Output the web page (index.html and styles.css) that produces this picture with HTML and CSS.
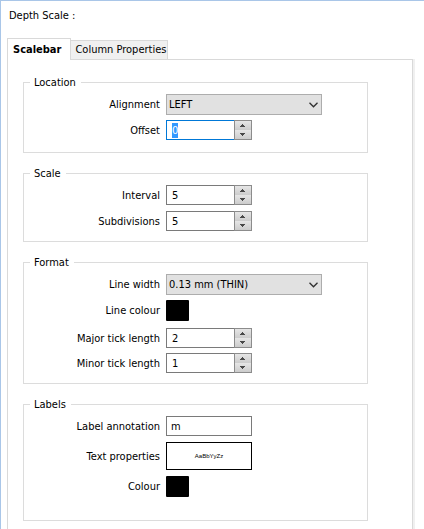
FILE: index.html
```html
<!DOCTYPE html>
<html lang="en">
<head>
<meta charset="utf-8">
<title>Depth Scale</title>
<link rel="stylesheet" href="styles.css">
</head>
<body>
<main class="window">
  <h1 class="title">Depth Scale :</h1>
  <div class="tabs" role="tablist">
    <button class="tab tab-active" type="button" role="tab" aria-selected="true">Scalebar</button>
    <button class="tab" type="button" role="tab" aria-selected="false">Column Properties</button>
  </div>
  <form class="pane">
    <fieldset class="group">
      <legend>Location</legend>
      <div class="rows">
        <div class="row">
          <label for="alignment">Alignment</label>
          <div class="combo">
            <select id="alignment"><option>LEFT</option></select>
            <svg class="chevron" viewBox="0 0 9 6" aria-hidden="true"><path d="M.5 .8 4.5 4.8 8.5 .8"/></svg>
          </div>
        </div>
        <div class="row">
          <label for="offset">Offset</label>
          <div class="spin">
            <input id="offset" type="text" inputmode="numeric" value="0" autofocus>
            <div class="steps">
              <button type="button" aria-label="Increase"><svg viewBox="0 0 5 3"><path d="M2 0h1v1h1v1h1v1H0V2h1V1h1z"/></svg></button>
              <button type="button" aria-label="Decrease"><svg viewBox="0 0 5 3"><path d="M0 0h5v1H4v1H3v1H2V2H1V1H0z"/></svg></button>
            </div>
          </div>
        </div>
      </div>
    </fieldset>

    <fieldset class="group group-short">
      <legend>Scale</legend>
      <div class="rows rows-loose">
        <div class="row">
          <label for="interval">Interval</label>
          <div class="spin">
            <input id="interval" type="text" inputmode="numeric" value="5">
            <div class="steps">
              <button type="button" aria-label="Increase"><svg viewBox="0 0 5 3"><path d="M2 0h1v1h1v1h1v1H0V2h1V1h1z"/></svg></button>
              <button type="button" aria-label="Decrease"><svg viewBox="0 0 5 3"><path d="M0 0h5v1H4v1H3v1H2V2H1V1H0z"/></svg></button>
            </div>
          </div>
        </div>
        <div class="row">
          <label for="subdivisions">Subdivisions</label>
          <div class="spin">
            <input id="subdivisions" type="text" inputmode="numeric" value="5">
            <div class="steps">
              <button type="button" aria-label="Increase"><svg viewBox="0 0 5 3"><path d="M2 0h1v1h1v1h1v1H0V2h1V1h1z"/></svg></button>
              <button type="button" aria-label="Decrease"><svg viewBox="0 0 5 3"><path d="M0 0h5v1H4v1H3v1H2V2H1V1H0z"/></svg></button>
            </div>
          </div>
        </div>
      </div>
    </fieldset>

    <fieldset class="group group-short">
      <legend>Format</legend>
      <div class="rows">
        <div class="row">
          <label for="line-width">Line width</label>
          <div class="combo">
            <select id="line-width"><option>0.13 mm (THIN)</option></select>
            <svg class="chevron" viewBox="0 0 9 6" aria-hidden="true"><path d="M.5 .8 4.5 4.8 8.5 .8"/></svg>
          </div>
        </div>
        <div class="row row-spaced">
          <label for="line-colour">Line colour</label>
          <button class="swatch" id="line-colour" type="button"></button>
        </div>
        <div class="row">
          <label for="major">Major tick length</label>
          <div class="spin">
            <input id="major" type="text" inputmode="numeric" value="2">
            <div class="steps">
              <button type="button" aria-label="Increase"><svg viewBox="0 0 5 3"><path d="M2 0h1v1h1v1h1v1H0V2h1V1h1z"/></svg></button>
              <button type="button" aria-label="Decrease"><svg viewBox="0 0 5 3"><path d="M0 0h5v1H4v1H3v1H2V2H1V1H0z"/></svg></button>
            </div>
          </div>
        </div>
        <div class="row">
          <label for="minor">Minor tick length</label>
          <div class="spin">
            <input id="minor" type="text" inputmode="numeric" value="1">
            <div class="steps">
              <button type="button" aria-label="Increase"><svg viewBox="0 0 5 3"><path d="M2 0h1v1h1v1h1v1H0V2h1V1h1z"/></svg></button>
              <button type="button" aria-label="Decrease"><svg viewBox="0 0 5 3"><path d="M0 0h5v1H4v1H3v1H2V2H1V1H0z"/></svg></button>
            </div>
          </div>
        </div>
      </div>
    </fieldset>

    <fieldset class="group group-tall">
      <legend>Labels</legend>
      <div class="rows rows-loose">
        <div class="row">
          <label for="annotation">Label annotation</label>
          <input class="text" id="annotation" type="text" value="m">
        </div>
        <div class="row">
          <label for="text-props">Text properties</label>
          <button class="sample" id="text-props" type="button">AaBbYyZz</button>
        </div>
        <div class="row">
          <label for="colour">Colour</label>
          <button class="swatch" id="colour" type="button"></button>
        </div>
      </div>
    </fieldset>
  </form>
</main>
<script src="script.js"></script>
</body>
</html>
```
FILE: styles.css
```css
* {
  box-sizing: border-box;
}

body {
  margin: 0;
  background: #fff;
  color: #000;
  font: 11px/15px "DejaVu Sans Condensed", "Noto Sans", sans-serif;
}

button,
input,
select {
  margin: 0;
  border-radius: 0;
  color: inherit;
  font: inherit;
}

.window {
  display: flex;
  flex-direction: column;
  min-height: 100vh;
  padding: 7px 11px 0 6px;
  border-top: 1px solid #a9c6e8;
  border-left: 1px solid #a9c6e8;
}

.title {
  margin: 0 0 15px 2px;
  font-size: 11px;
  font-weight: normal;
  line-height: 15px;
}

.tabs {
  display: flex;
  align-items: flex-end;
}

.tab {
  height: 19px;
  padding: 0 1px 0 4px;
  border: 1px solid #d9d9d9;
  border-left: 0;
  border-bottom: 0;
  background: #f0f0f0;
  line-height: 18px;
}

.tab-active {
  z-index: 1;
  height: 22px;
  margin-bottom: -1px;
  padding: 0 9px 0 5px;
  border-left: 1px solid #d9d9d9;
  background: #fff;
  font-weight: bold;
}

.pane {
  flex: 1;
  padding: 15px 44px 8px 15px;
  border: 1px solid #d9d9d9;
  border-bottom: 0;
  box-shadow: 2px 0 #f0f0f0;
}

.group {
  min-width: 0;
  margin: 0 0 13px;
  padding: 4px 0 12px;
  border: 1px solid #dcdcdc;
}

.group-short {
  padding-bottom: 10px;
}

.group-tall {
  margin-bottom: 0;
  padding-bottom: 23px;
}

.group legend {
  margin-left: 6px;
  padding: 0 5px 0 4px;
}

.rows {
  display: grid;
  gap: 5px;
}

.rows-loose {
  gap: 6px;
}

.row {
  display: grid;
  grid-template-columns: 136px auto;
  column-gap: 6px;
  align-items: center;
  justify-content: start;
}

.row-spaced {
  margin-bottom: 2px;
}

.row label {
  text-align: right;
  white-space: nowrap;
}

.combo {
  position: relative;
  width: 156px;
  height: 21px;
}

.combo select {
  display: block;
  width: 100%;
  height: 100%;
  padding: 0 20px 0 2px;
  border: 1px solid #adadad;
  outline: 0;
  background: #e1e1e1;
  appearance: none;
}

.chevron {
  position: absolute;
  top: 8px;
  right: 4px;
  width: 9px;
  height: 6px;
  fill: none;
  stroke: #303030;
  stroke-width: 1.3;
  pointer-events: none;
}

.spin {
  display: flex;
  width: 86px;
  height: 20px;
}

.spin input {
  flex: 1;
  min-width: 0;
  padding: 0 5px;
  border: 1px solid #7a7a7a;
  border-right: 0;
  outline: 0;
  background: #fff;
}

.spin input:focus {
  border-color: #0078d7;
}

.spin input::selection {
  background: #3399ff;
  color: #fff;
}

.steps {
  display: grid;
  grid-template-rows: 1fr 1fr;
  width: 18px;
  border: 1px solid #8c8c8c;
}

.steps button {
  display: flex;
  align-items: center;
  justify-content: center;
  padding: 0 2px 0 0;
  border: 0;
  background: linear-gradient(#e6e6e6, #cccccc);
}

.steps svg {
  width: 5px;
  height: 3px;
  fill: #484848;
}

.swatch {
  width: 23px;
  height: 21px;
  padding: 0;
  border: 0;
  border-radius: 1px;
  background: #000;
}

.text {
  width: 86px;
  height: 20px;
  padding: 0 4px;
  border: 1px solid #7a7a7a;
  outline: 0;
}

.sample {
  width: 86px;
  height: 28px;
  padding: 0;
  border: 1px solid #000;
  background: #fff;
  font: 6px/8px "Liberation Sans", sans-serif;
}
```
FILE: script.js
```js
const offset = document.getElementById("offset");
offset.focus();
offset.select();
```
